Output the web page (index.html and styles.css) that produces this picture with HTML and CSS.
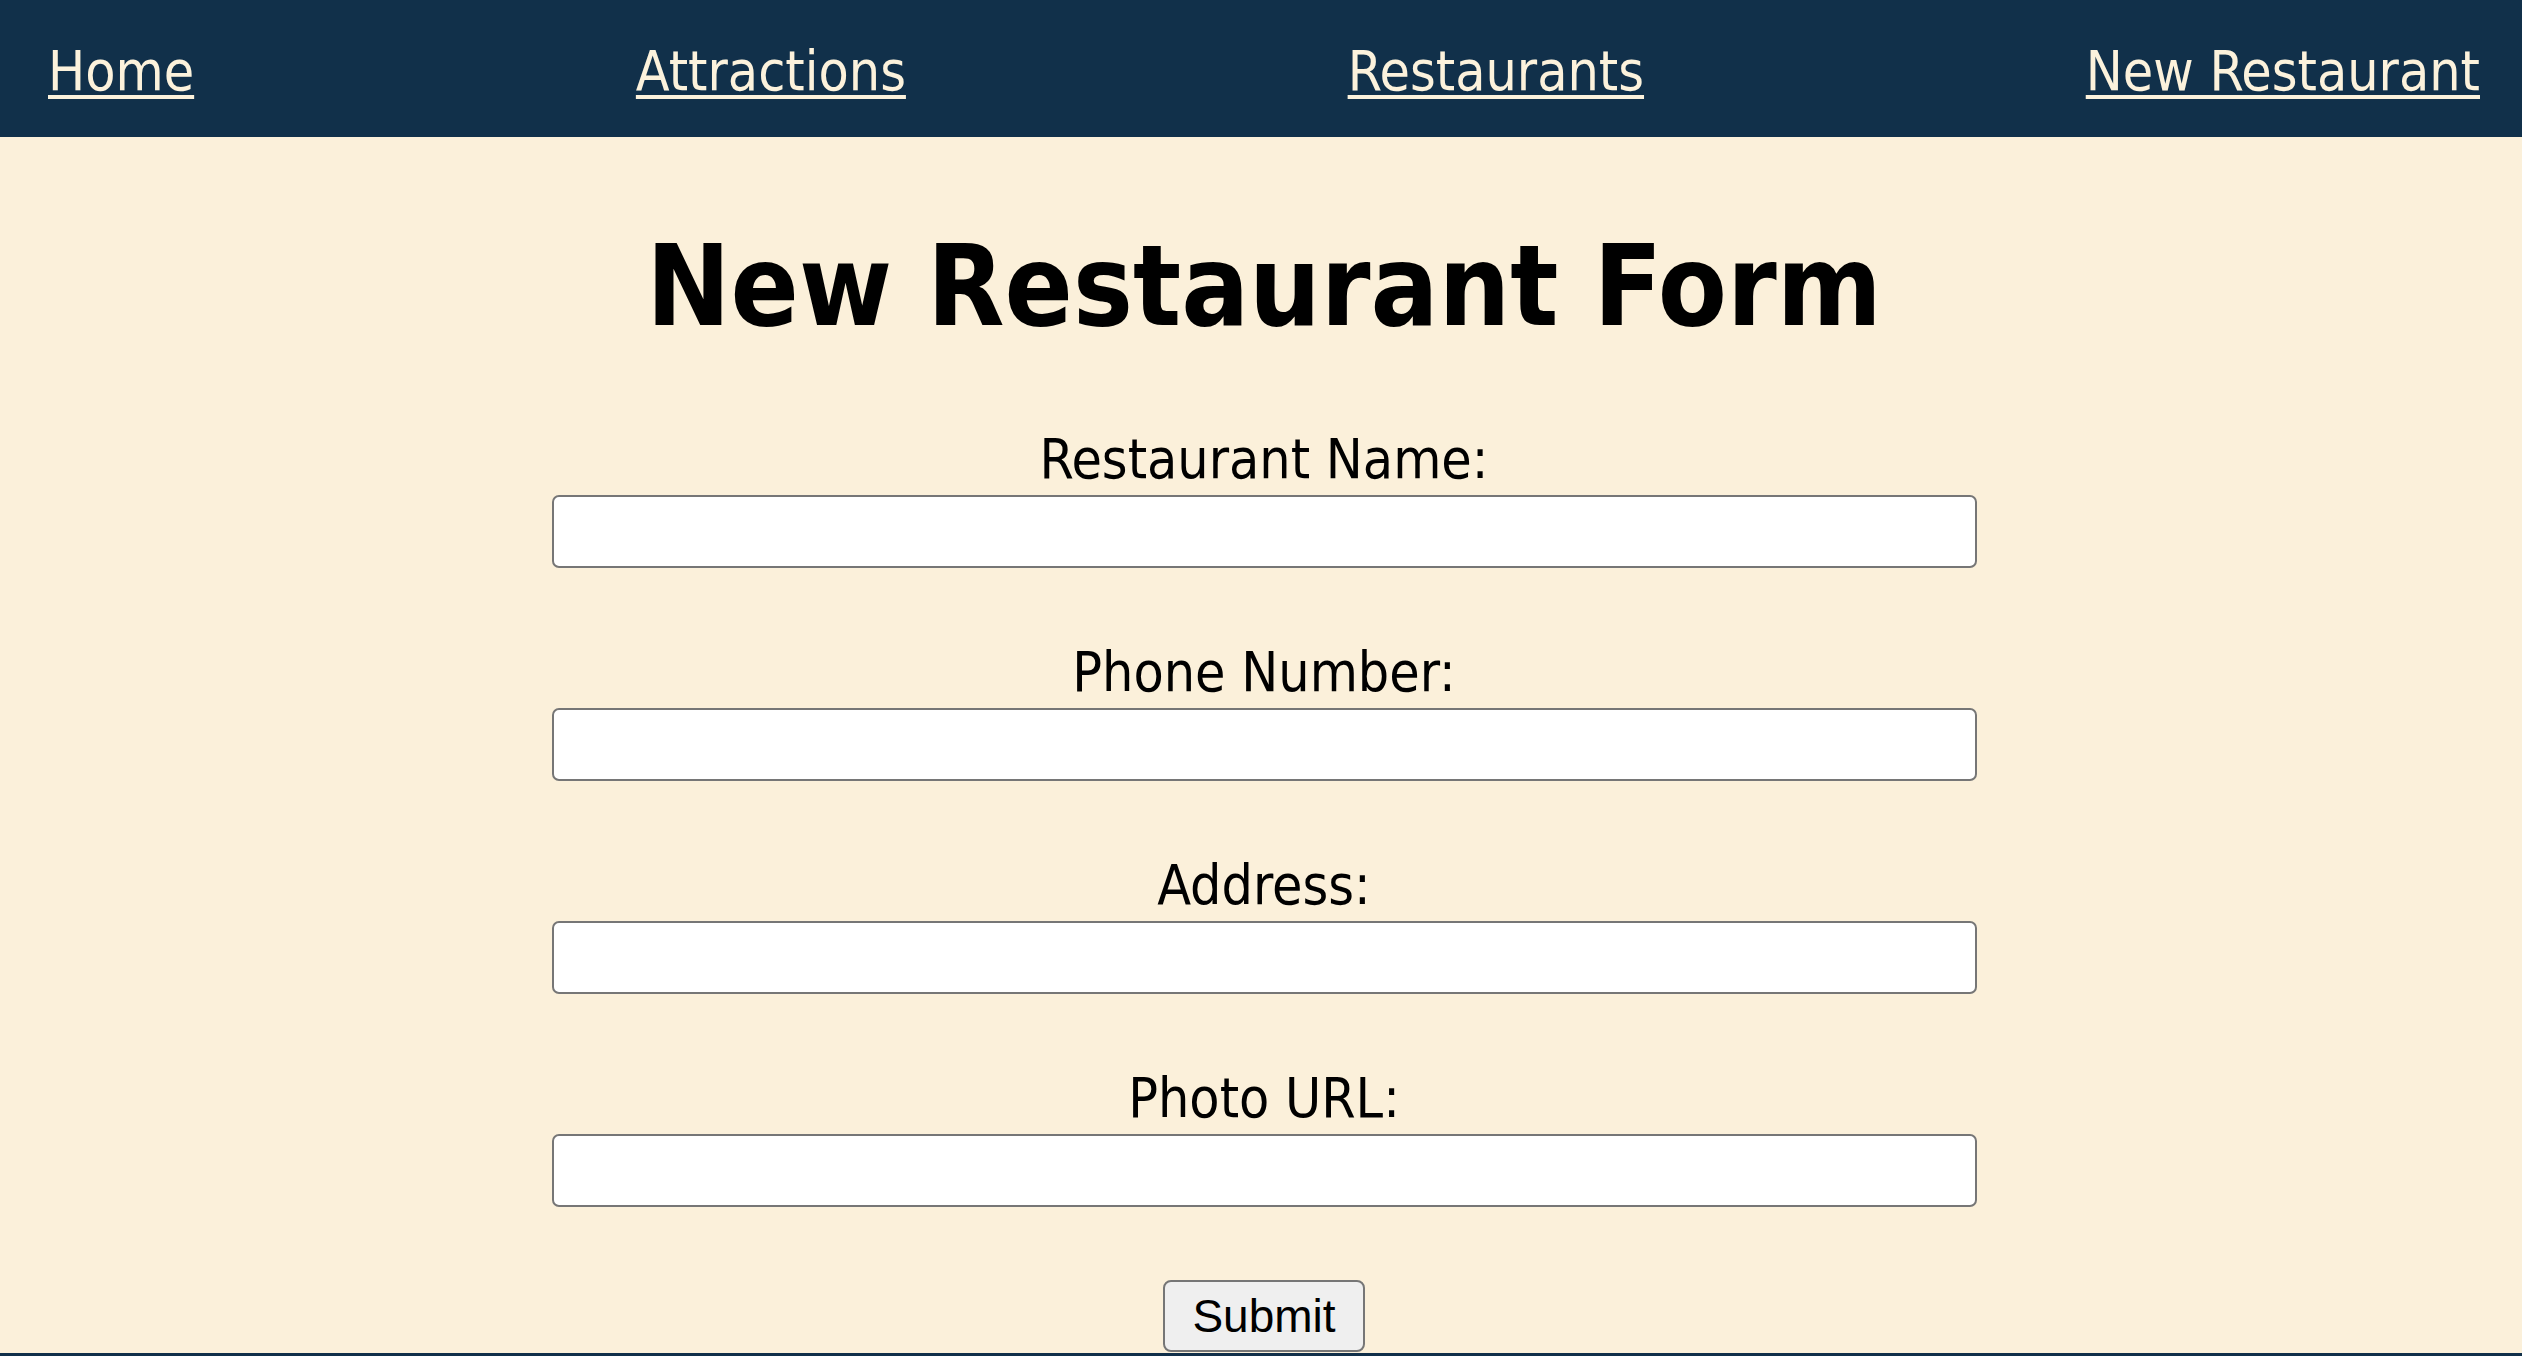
FILE: index.html
```html
<!DOCTYPE html>
<html lang="en">
<head>
<meta charset="utf-8">
<title>New Restaurant Form</title>
<link rel="stylesheet" href="styles.css">
</head>
<body>
<nav class="topnav">
  <a class="navlink" href="#">Home</a>
  <a class="navlink" href="#">Attractions</a>
  <a class="navlink" href="#">Restaurants</a>
  <a class="navlink" href="#">New Restaurant</a>
</nav>
<main class="content">
  <h1 class="title">New Restaurant Form</h1>
  <form class="form">
    <div class="field">
      <label class="label" for="name">Restaurant Name:</label>
      <input class="input" id="name" type="text">
    </div>
    <div class="field">
      <label class="label" for="phone">Phone Number:</label>
      <input class="input" id="phone" type="text">
    </div>
    <div class="field">
      <label class="label" for="address">Address:</label>
      <input class="input" id="address" type="text">
    </div>
    <div class="field">
      <label class="label" for="photo">Photo URL:</label>
      <input class="input" id="photo" type="text">
    </div>
    <button class="submit" type="submit">Submit</button>
  </form>
</main>
<footer class="footer"></footer>
</body>
</html>
```

FILE: styles.css
```css
html, body {
  margin: 0;
  padding: 0;
}
body {
  background: #fbf0da;
  font-family: "DejaVu Sans Condensed", "DejaVu Sans", sans-serif;
  color: #000;
}
.topnav {
  background: #11304a;
  height: 137px;
  display: flex;
  align-items: center;
  justify-content: space-between;
  padding: 6px 42px 0 48px;
  box-sizing: border-box;
}
.navlink {
  color: #fcf2dc;
  font-size: 55px;
  line-height: 1.164;
  text-decoration: underline;
  text-decoration-thickness: 4px;
  text-underline-offset: 5px;
}
.content {
  display: flex;
  flex-direction: column;
  align-items: center;
  padding: 0 0 1px 6px;
}
.title {
  font-size: 112px;
  font-weight: bold;
  line-height: 1.164;
  margin: 84px 0 0;
  text-align: center;
}
.form {
  display: flex;
  flex-direction: column;
  align-items: center;
  margin-top: 76px;
  gap: 72px;
}
.field {
  display: flex;
  flex-direction: column;
  align-items: center;
  gap: 4px;
}
.label {
  font-size: 55px;
  line-height: 1.164;
}
.input {
  box-sizing: border-box;
  width: 1425px;
  height: 73px;
  border: 2px solid #767676;
  border-radius: 7px;
  background: #fff;
  margin: 0;
  padding: 0 8px;
  font-size: 40px;
}
.submit {
  box-sizing: border-box;
  height: 72px;
  padding: 0 27px;
  border: 2px solid #767676;
  border-radius: 8px;
  background: #efefef;
  font-family: "Liberation Sans", Arial, sans-serif;
  font-size: 46px;
  color: #000;
  margin: 1px 0 0;
}
.footer {
  background: #11304a;
  height: 120px;
}
```
